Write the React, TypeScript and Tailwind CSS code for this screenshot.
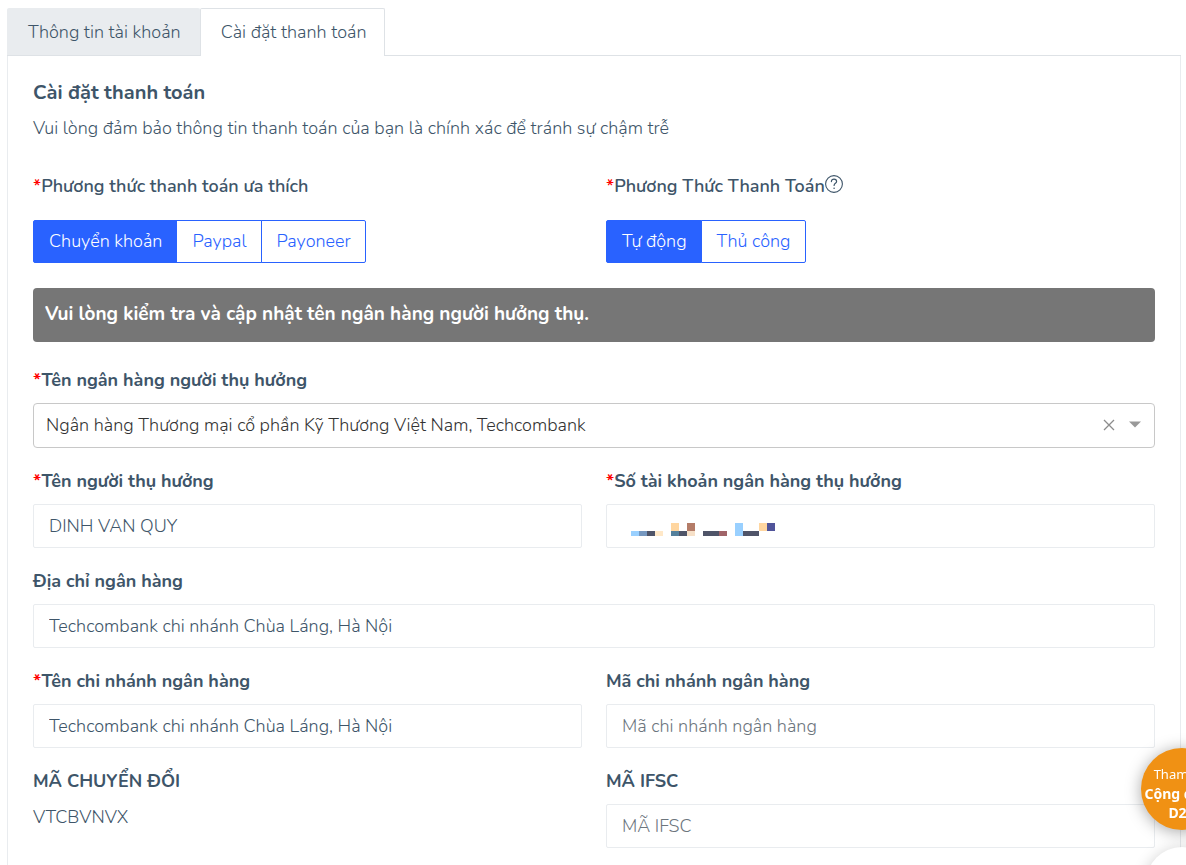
import { useState } from 'react'
import type { ReactNode } from 'react'
import clsx from 'clsx'

type FieldProps = {
  id: string
  label: string
  required?: boolean
  children: ReactNode
}

const INPUT =
  'block h-11 w-full rounded-xs border border-[#e9ecef] bg-white px-[15px] text-[#3e5569] placeholder-[#6c757d] outline-none focus:border-[#2962ff]'

// Pixelated account number, one entry per block: column, row, colour
const MASK: [number, number, string][] = [
  [0, 1, '#99d0ff'],
  [1, 1, '#7698c0'],
  [2, 1, '#4f5468'],
  [3, 1, '#ffe8c8'],
  [5, 0, '#ffd6a0'],
  [7, 0, '#b47c68'],
  [5, 1, '#54809c'],
  [6, 1, '#4f5468'],
  [7, 1, '#f6e0c8'],
  [9, 1, '#4f5468'],
  [10, 1, '#4f5468'],
  [11, 1, '#a06468'],
  [13, 0, '#99d0ff'],
  [13, 1, '#99d0ff'],
  [14, 1, '#4f5468'],
  [15, 1, '#4f5468'],
  [16, 0, '#ffd6a0'],
  [17, 0, '#50549a'],
]

function Required() {
  return <span className="text-[#ff0000]">*</span>
}

function Field({ id, label, required, children }: FieldProps) {
  return (
    <div>
      <label htmlFor={id} className="mb-2.5 block font-bold">
        {required && <Required />}
        {label}
      </label>
      {children}
    </div>
  )
}

type ButtonGroupProps = {
  labelledBy: string
  options: string[]
  value: string
  onChange: (value: string) => void
}

function ButtonGroup({ labelledBy, options, value, onChange }: ButtonGroupProps) {
  return (
    <div role="group" aria-labelledby={labelledBy} className="flex">
      {options.map(option => (
        <button
          key={option}
          type="button"
          aria-pressed={value === option}
          onClick={() => onChange(option)}
          className={clsx(
            '-ml-px h-[43px] border border-[#2962ff] pr-3.5 pb-0.5 pl-[15px] first:ml-0 first:rounded-l-xs last:rounded-r-xs',
            value === option ? 'bg-[#2962ff] text-white' : 'bg-white text-[#2962ff]'
          )}
        >
          {option}
        </button>
      ))}
    </div>
  )
}

export default function App() {
  const [method, setMethod] = useState('Chuyển khoản')
  const [mode, setMode] = useState('Tự động')
  const [bank, setBank] = useState('tcb')

  return (
    <div className="flex min-h-screen flex-col overflow-x-hidden bg-white pt-2 pr-[5px] pl-[7px] font-['Nunito','Lato',sans-serif] text-lg leading-[26px] font-light text-[#3e5569]">
      {/* Tabs */}
      <div role="tablist" className="flex border-b border-[#dee2e6]">
        <button
          role="tab"
          aria-selected={false}
          className="h-[47px] rounded-t-xs border border-b-0 border-[#e9ecef] bg-[#e9ecef] pr-[18px] pl-5"
        >
          Thông tin tài khoản
        </button>
        <button
          role="tab"
          aria-selected={true}
          className="-mb-px h-12 rounded-t-xs border border-b-0 border-[#dee2e6] bg-white pr-[18px] pb-0.5 pl-5"
        >
          Cài đặt thanh toán
        </button>
      </div>

      {/* Payment settings */}
      <form className="flex-1 border-x border-[#e9ecef] px-[25px] pt-6 pb-4">
        <h1 className="mb-[9px] text-xl leading-[26px] font-bold">Cài đặt thanh toán</h1>
        <p className="mb-8">Vui lòng đảm bảo thông tin thanh toán của bạn là chính xác để tránh sự chậm trễ</p>

        <div className="mb-[25px] grid grid-cols-2 gap-6">
          <div>
            <p id="method" className="mb-[21px] font-semibold">
              <Required />
              Phương thức thanh toán ưa thích
            </p>
            <ButtonGroup
              labelledBy="method"
              options={['Chuyển khoản', 'Paypal', 'Payoneer']}
              value={method}
              onChange={setMethod}
            />
          </div>
          <div>
            <div className="mb-[21px] flex">
              <p id="mode" className="font-semibold">
                <Required />
                Phương Thức Thanh Toán
              </p>
              <svg width="18" height="20" viewBox="1 0 18 20" fill="none" className="mt-px">
                <circle cx="10" cy="10" r="8.4" stroke="currentColor" strokeWidth="1.1" />
                <path d="M7.4 7.6c0-1.5 1.1-2.5 2.6-2.5s2.6 1 2.6 2.3c0 1.8-2.5 2-2.5 4"
                  stroke="currentColor" strokeWidth="1.2" strokeLinecap="round" />
                <circle cx="10.1" cy="14.2" r="0.8" fill="currentColor" />
              </svg>
            </div>
            <ButtonGroup
              labelledBy="mode"
              options={['Tự động', 'Thủ công']}
              value={mode}
              onChange={setMode}
            />
          </div>
        </div>

        <div role="alert" className="mb-[25px] rounded-sm bg-[#767676] px-3 pt-[13px] pb-[15px] text-[19px] leading-[26px] font-bold text-white">
          Vui lòng kiểm tra và cập nhật tên ngân hàng người hưởng thụ.
        </div>

        <div className="flex flex-col gap-5">
          <Field id="bank" label="Tên ngân hàng người thụ hưởng" required>
            <div className="flex h-[45px] items-center rounded-sm border border-[#c8c8c8] px-3 pb-0.5">
              <select
                id="bank"
                value={bank}
                onChange={e => setBank(e.target.value)}
                className="h-full min-w-0 flex-1 appearance-none bg-transparent text-[#333333] outline-none"
              >
                <option value=""></option>
                <option value="tcb">Ngân hàng Thương mại cổ phần Kỹ Thương Việt Nam, Techcombank</option>
              </select>
              <button type="button" aria-label="Xóa" onClick={() => setBank('')} className="mr-3 p-px">
                <svg width="12" height="12" viewBox="0 0 12 12" fill="none">
                  <path d="M1 1l10 10M11 1L1 11" stroke="#8c8c8c" strokeWidth="1.3" />
                </svg>
              </button>
              <svg width="14" height="7" viewBox="0 0 14 7" className="pointer-events-none">
                <path d="M1 0.5h12L7 6.5z" fill="#999999" />
              </svg>
            </div>
          </Field>

          <div className="grid grid-cols-2 gap-6">
            <Field id="holder" label="Tên người thụ hưởng" required>
              <input id="holder" className={INPUT} defaultValue="DINH VAN QUY" />
            </Field>
            <Field id="account" label="Số tài khoản ngân hàng thụ hưởng" required>
              <div className="relative">
                <input id="account" className={INPUT} />
                <svg width="144" height="13" viewBox="0 0 144 13" shapeRendering="crispEdges"
                  className="pointer-events-none absolute top-[19px] left-[25px]">
                  {MASK.map(([col, row, fill]) => (
                    <rect key={`${col}-${row}`} x={col * 8} y={row * 8} width="8" height={row ? 5 : 8} fill={fill} />
                  ))}
                </svg>
              </div>
            </Field>
          </div>

          <Field id="address" label="Địa chỉ ngân hàng">
            <input id="address" className={INPUT} defaultValue="Techcombank chi nhánh Chùa Láng, Hà Nội" />
          </Field>

          <div className="grid grid-cols-2 gap-6">
            <Field id="branch" label="Tên chi nhánh ngân hàng" required>
              <input id="branch" className={INPUT} defaultValue="Techcombank chi nhánh Chùa Láng, Hà Nội" />
            </Field>
            <Field id="branch-code" label="Mã chi nhánh ngân hàng">
              <input id="branch-code" className={INPUT} placeholder="Mã chi nhánh ngân hàng" />
            </Field>
          </div>

          <div className="grid grid-cols-2 gap-6">
            <div>
              <p className="mb-2.5 font-bold">MÃ CHUYỂN ĐỔI</p>
              <p>VTCBVNVX</p>
            </div>
            <Field id="ifsc" label="MÃ IFSC">
              <input id="ifsc" className={INPUT} placeholder="MÃ IFSC" />
            </Field>
          </div>
        </div>
      </form>

      {/* Floating buttons, partly off the right edge */}
      <a
        href="#community"
        className="fixed -right-[37px] bottom-[35px] flex size-[82px] flex-col items-center justify-center rounded-full bg-[#f09114] pt-2 font-['Noto_Sans',sans-serif] text-sm leading-[19px] font-bold whitespace-nowrap text-white shadow-[0_2px_16px_rgba(0,0,0,0.35)]"
      >
        <span className="text-[13px] font-normal">Tham gia</span>
        <span>Cộng đồng</span>
        <span>D2C</span>
      </a>
      <button
        aria-label="Chat"
        className="fixed -right-8 -bottom-[54px] size-[72px] rounded-full bg-white shadow-[0_2px_16px_rgba(0,0,0,0.2)]"
      />
    </div>
  )
}
